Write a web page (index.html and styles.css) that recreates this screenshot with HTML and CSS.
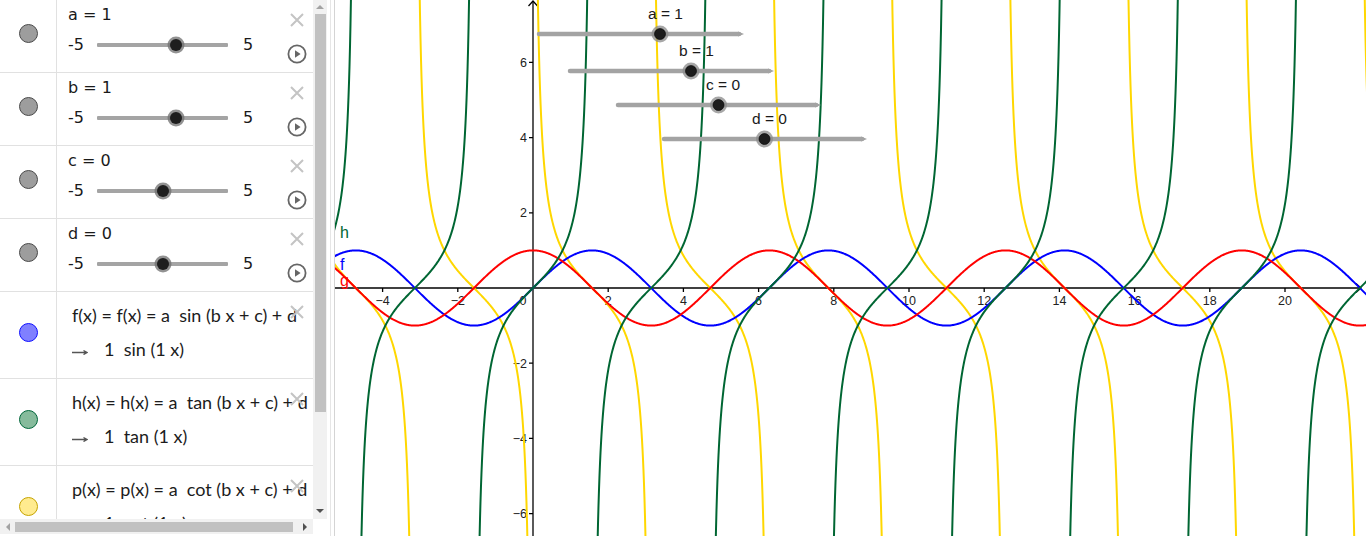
FILE: index.html
```html
<!DOCTYPE html>
<html>
<head>
<meta charset="utf-8">
<title>Graph</title>
<link rel="stylesheet" href="styles.css">
</head>
<body>
<div class="app">
  <div class="algebra">
    <div class="algebra-main">
      <div class="list">
        <div class="row slider">
          <div class="marble-col"><span class="marble"></span></div>
          <div class="slider-body">
            <div class="name">a = 1</div>
            <div class="range"><span class="min">-5</span><span class="track"><span class="knob" style="left:60%"></span></span><span class="max">5</span></div>
          </div>
          <div class="actions">
            <svg class="ico-x" width="16" height="16" viewBox="0 0 16 16"><path d="M2 2L14 14M14 2L2 14"/></svg>
            <svg class="ico-play" width="20" height="20" viewBox="0 0 20 20"><circle cx="10" cy="10" r="8.6"/><path d="M8 6.2L13.6 10L8 13.8Z"/></svg>
          </div>
        </div>
        <div class="row slider">
          <div class="marble-col"><span class="marble"></span></div>
          <div class="slider-body">
            <div class="name">b = 1</div>
            <div class="range"><span class="min">-5</span><span class="track"><span class="knob" style="left:60%"></span></span><span class="max">5</span></div>
          </div>
          <div class="actions">
            <svg class="ico-x" width="16" height="16" viewBox="0 0 16 16"><path d="M2 2L14 14M14 2L2 14"/></svg>
            <svg class="ico-play" width="20" height="20" viewBox="0 0 20 20"><circle cx="10" cy="10" r="8.6"/><path d="M8 6.2L13.6 10L8 13.8Z"/></svg>
          </div>
        </div>
        <div class="row slider">
          <div class="marble-col"><span class="marble"></span></div>
          <div class="slider-body">
            <div class="name">c = 0</div>
            <div class="range"><span class="min">-5</span><span class="track"><span class="knob" style="left:50%"></span></span><span class="max">5</span></div>
          </div>
          <div class="actions">
            <svg class="ico-x" width="16" height="16" viewBox="0 0 16 16"><path d="M2 2L14 14M14 2L2 14"/></svg>
            <svg class="ico-play" width="20" height="20" viewBox="0 0 20 20"><circle cx="10" cy="10" r="8.6"/><path d="M8 6.2L13.6 10L8 13.8Z"/></svg>
          </div>
        </div>
        <div class="row slider">
          <div class="marble-col"><span class="marble"></span></div>
          <div class="slider-body">
            <div class="name">d = 0</div>
            <div class="range"><span class="min">-5</span><span class="track"><span class="knob" style="left:50%"></span></span><span class="max">5</span></div>
          </div>
          <div class="actions">
            <svg class="ico-x" width="16" height="16" viewBox="0 0 16 16"><path d="M2 2L14 14M14 2L2 14"/></svg>
            <svg class="ico-play" width="20" height="20" viewBox="0 0 20 20"><circle cx="10" cy="10" r="8.6"/><path d="M8 6.2L13.6 10L8 13.8Z"/></svg>
          </div>
        </div>
        <div class="row func">
          <div class="marble-col"><span class="marble m-blue"></span></div>
          <div class="func-body">
            <div class="formula">f(x) = f(x) = a&nbsp; sin (b x + c) + d</div>
            <div class="formula out"><svg class="arrow" width="16" height="6" viewBox="0 0 16 6"><path d="M0 3.5H14M11.5 1.5L15 3.5L11.5 5.5"/></svg><span>1&nbsp; sin (1 x)</span></div>
          </div>
          <div class="actions">
            <svg class="ico-x" width="16" height="16" viewBox="0 0 16 16"><path d="M2 2L14 14M14 2L2 14"/></svg>
          </div>
        </div>
        <div class="row func">
          <div class="marble-col"><span class="marble m-green"></span></div>
          <div class="func-body">
            <div class="formula">h(x) = h(x) = a&nbsp; tan (b x + c) + d</div>
            <div class="formula out"><svg class="arrow" width="16" height="6" viewBox="0 0 16 6"><path d="M0 3.5H14M11.5 1.5L15 3.5L11.5 5.5"/></svg><span>1&nbsp; tan (1 x)</span></div>
          </div>
          <div class="actions">
            <svg class="ico-x" width="16" height="16" viewBox="0 0 16 16"><path d="M2 2L14 14M14 2L2 14"/></svg>
          </div>
        </div>
        <div class="row func">
          <div class="marble-col"><span class="marble m-yellow"></span></div>
          <div class="func-body">
            <div class="formula">p(x) = p(x) = a&nbsp; cot (b x + c) + d</div>
            <div class="formula out"><svg class="arrow" width="16" height="6" viewBox="0 0 16 6"><path d="M0 3.5H14M11.5 1.5L15 3.5L11.5 5.5"/></svg><span>1&nbsp; cot (1 x)</span></div>
          </div>
          <div class="actions">
            <svg class="ico-x" width="16" height="16" viewBox="0 0 16 16"><path d="M2 2L14 14M14 2L2 14"/></svg>
          </div>
        </div>
      </div>
      <div class="vscroll">
        <div class="sb-btn vs-up"><span class="tri tri-up"></span></div>
        <div class="vs-thumb"></div>
        <div class="sb-fill"></div>
        <div class="sb-btn vs-down"><span class="tri tri-down"></span></div>
      </div>
    </div>
    <div class="hscroll-row">
      <div class="hscroll">
        <div class="sb-btn hs-left"><span class="tri tri-left"></span></div>
        <div class="hs-thumb"></div>
        <div class="sb-fill"></div>
        <div class="sb-btn hs-right"><span class="tri tri-right"></span></div>
      </div>
      <div class="corner"></div>
    </div>
  </div>
  <div class="divider"></div>
  <div class="graphics">
    <svg class="plot" width="1031" height="536" viewBox="0 0 1031 536">
      <g class="axes">
        <line x1="0" y1="288" x2="1026" y2="288"/>
        <line x1="198" y1="536" x2="198" y2="1"/>
        <polyline points="1021,283.5 1026,288 1021,292.5"/>
        <polyline points="193.5,6 198,1 202.5,6"/>
        <path d="M47.6 288V292M122.8 288V292M273.2 288V292M348.4 288V292M423.6 288V292M498.8 288V292M574 288V292M649.2 288V292M724.4 288V292M799.6 288V292M874.8 288V292M950 288V292M194 212.8H198M194 137.6H198M194 62.4H198M194 363.2H198M194 438.4H198M194 513.6H198"/>
      </g>
      <g class="ticklabels">
        <text x="47.6" y="305" class="tl-x">−4</text>
        <text x="122.8" y="305" class="tl-x">−2</text>
        <text x="188" y="305" class="tl-x">0</text>
        <text x="273.2" y="305" class="tl-x">2</text>
        <text x="348.4" y="305" class="tl-x">4</text>
        <text x="423.6" y="305" class="tl-x">6</text>
        <text x="498.8" y="305" class="tl-x">8</text>
        <text x="574" y="305" class="tl-x">10</text>
        <text x="649.2" y="305" class="tl-x">12</text>
        <text x="724.4" y="305" class="tl-x">14</text>
        <text x="799.6" y="305" class="tl-x">16</text>
        <text x="874.8" y="305" class="tl-x">18</text>
        <text x="950" y="305" class="tl-x">20</text>
        <text x="192" y="67" class="tl-y">6</text>
        <text x="192" y="142.2" class="tl-y">4</text>
        <text x="192" y="217.4" class="tl-y">2</text>
        <text x="192" y="367.8" class="tl-y">−2</text>
        <text x="192" y="443" class="tl-y">−4</text>
        <text x="192" y="518.2" class="tl-y">−6</text>
      </g>
      <g class="curves">
        <path id="curve-p" class="c-p"/>
        <path id="curve-f" class="c-f"/>
        <path id="curve-g" class="c-g"/>
        <path id="curve-h" class="c-h"/>
      </g>
      <g class="fnlabels">
        <text x="5" y="238" class="fl-h">h</text>
        <text x="5" y="270" class="fl-f">f</text>
        <text x="5" y="286" class="fl-g">g</text>
      </g>
      <g class="gsliders">
        <line x1="204" y1="34" x2="404" y2="34" class="gs-line"/>
        <polygon points="403,31.5 409,34 403,36.5" class="gs-tip"/>
        <circle cx="325" cy="34" r="8.5" class="gs-halo"/>
        <circle cx="325" cy="34" r="5.5" class="gs-knob"/>
        <text x="313" y="18.5" class="gs-label">a = 1</text>

        <line x1="235" y1="71" x2="434" y2="71" class="gs-line"/>
        <polygon points="433,68.5 439,71 433,73.5" class="gs-tip"/>
        <circle cx="356" cy="71" r="8.5" class="gs-halo"/>
        <circle cx="356" cy="71" r="5.5" class="gs-knob"/>
        <text x="344" y="56" class="gs-label">b = 1</text>

        <line x1="283" y1="105" x2="481" y2="105" class="gs-line"/>
        <polygon points="480,102.5 486,105 480,107.5" class="gs-tip"/>
        <circle cx="383.5" cy="105" r="8.5" class="gs-halo"/>
        <circle cx="383.5" cy="105" r="5.5" class="gs-knob"/>
        <text x="371" y="89.5" class="gs-label">c = 0</text>

        <line x1="329" y1="139" x2="527" y2="139" class="gs-line"/>
        <polygon points="526,136.5 532,139 526,141.5" class="gs-tip"/>
        <circle cx="429.5" cy="139" r="8.5" class="gs-halo"/>
        <circle cx="429.5" cy="139" r="5.5" class="gs-knob"/>
        <text x="417" y="123.5" class="gs-label">d = 0</text>
      </g>
    </svg>
  </div>
</div>
<script src="script.js"></script>
</body>
</html>
```

FILE: styles.css
```css
* { box-sizing: border-box; }
html, body { margin: 0; padding: 0; background: #fff; overflow: hidden; }
body { font-family: "DejaVu Sans", sans-serif; color: #1a1a1a; }

.app { display: flex; width: 1366px; height: 536px; }

/* ---------- algebra view ---------- */
.algebra { width: 327px; flex: none; display: flex; flex-direction: column; }
.algebra-main { display: flex; height: 519px; }
.list { width: 313px; height: 519px; overflow: hidden; flex: none; }

.row { position: relative; display: flex; border-bottom: 1px solid #e1e1e1; }
.row.slider { height: 73px; }
.row.func { height: 87px; }

.marble-col {
  width: 57px; flex: none; border-right: 1px solid #e1e1e1;
  display: flex; align-items: center; justify-content: center; padding-bottom: 5px;
}
.marble { width: 19px; height: 19px; border-radius: 50%; border: 1px solid #4a4a4a; background: #9d9d9d; }
.marble.m-blue { background: #8080ff; border-color: #1010ff; }
.marble.m-green { background: #86bb9c; border-color: #00663a; }
.marble.m-yellow { background: #ffeb8f; border-color: #c6a400; }

.slider-body { flex: 1; padding: 5px 0 0 11px; font-size: 16px; line-height: 20px; white-space: nowrap; }
.name { height: 20px; }
.range { display: flex; align-items: center; height: 20px; margin-top: 10px; }
.range .min { width: 29px; }
.track { position: relative; width: 131px; height: 4px; background: #a4a4a4; border-radius: 1px; }
.knob {
  position: absolute; top: 50%; width: 12px; height: 12px; margin: -6px 0 0 -6px;
  border-radius: 50%; background: #1e1e1e; box-shadow: 0 0 0 2.5px rgba(110,110,110,.75);
}
.range .max { margin-left: 15px; }

.func-body {
  flex: 1; min-width: 0; padding: 11px 0 0 15px; overflow: hidden; white-space: nowrap;
  font-family: "Lato", "DejaVu Sans", sans-serif; font-size: 18px; line-height: 24px; color: #1c1c1c;
}
.formula { height: 24px; }
.formula.out { margin-top: 10px; display: flex; align-items: center; }
.arrow { flex: none; margin-right: 16px; margin-top: 6px; }
.arrow path { fill: none; stroke: #555; stroke-width: 1.4; }

.actions {
  position: absolute; top: 12px; right: 6px; width: 20px;
  display: flex; flex-direction: column; align-items: center; gap: 16px;
}
.ico-x path { stroke: #c4c4c4; stroke-width: 2; fill: none; }
.ico-play circle { fill: none; stroke: #666; stroke-width: 1.8; }
.ico-play path { fill: #666; }

/* scrollbars */
.vscroll { width: 14px; flex: none; background: #f1f1f1; display: flex; flex-direction: column; align-items: center; }
.sb-btn { display: flex; align-items: center; justify-content: center; flex: none; }
.vs-up { height: 14px; width: 14px; }
.vs-thumb { width: 11px; height: 398px; background: #c1c1c1; flex: none; }
.sb-fill { flex: 1; }
.vs-down { height: 17px; width: 14px; }

.hscroll-row { display: flex; height: 15px; }
.hscroll { width: 313px; flex: none; background: #f1f1f1; display: flex; align-items: center; }
.hs-left { width: 15px; height: 15px; }
.hs-thumb { width: 278px; height: 10px; background: #c1c1c1; flex: none; }
.hs-right { width: 17px; height: 15px; }
.corner { width: 14px; background: #fff; }

.tri { width: 0; height: 0; display: block; }
.tri-up { border-left: 4px solid transparent; border-right: 4px solid transparent; border-bottom: 4px solid #a3a3a3; }
.tri-down { border-left: 4px solid transparent; border-right: 4px solid transparent; border-top: 4px solid #505050; }
.tri-left { border-top: 4px solid transparent; border-bottom: 4px solid transparent; border-right: 4px solid #a3a3a3; }
.tri-right { border-top: 4px solid transparent; border-bottom: 4px solid transparent; border-left: 4px solid #505050; }

.divider { width: 8px; flex: none; display: flex; }
.divider::before { content: ""; width: 5px; margin-left: 3px; border-left: 1px solid #e6e6e6; border-right: 1px solid #d4d4d4; }

/* ---------- graphics view ---------- */
.graphics { flex: 1; position: relative; overflow: hidden; background: #fff; }
.plot { display: block; }
.axes line, .axes polyline, .axes path { stroke: #000; stroke-width: 1.3; fill: none; }
.ticklabels text { font-family: "Liberation Sans", Arial, sans-serif; font-size: 12.5px; fill: #222; }
.tl-x { text-anchor: middle; }
.tl-y { text-anchor: end; }

.curves path { fill: none; stroke-width: 2; stroke-linejoin: round; }
.c-f { stroke: #0000ff; }
.c-g { stroke: #ff0000; }
.c-h { stroke: #006633; }
.c-p { stroke: #ffd700; }

.fnlabels text { font-family: "Liberation Sans", Arial, sans-serif; font-size: 16px; }
.fl-h { fill: #006633; }
.fl-f { fill: #0000ff; }
.fl-g { fill: #ff0000; }

.gs-line { stroke: #a3a3a3; stroke-width: 4.5; stroke-linecap: round; }
.gs-tip { fill: #a3a3a3; }
.gs-halo { fill: #8a8a8a; fill-opacity: .75; }
.gs-knob { fill: #1c1c1c; stroke: #000; stroke-width: .6; }
.gs-label { font-family: "Liberation Sans", Arial, sans-serif; font-size: 15.5px; fill: #1a1a1a; }
```

FILE: script.js
```js
(function () {
  var X0 = 198, Y0 = 288, S = 37.6, W = 1031;
  function build(fn) {
    var d = '', pen = false, prev = null;
    for (var px = -2; px <= W + 2; px += 0.5) {
      var x = (px - X0) / S, y = fn(x);
      if (!isFinite(y) || Math.abs(y) > 40) { pen = false; prev = null; continue; }
      if (prev !== null && Math.abs(y - prev) > 20) pen = false;
      d += (pen ? 'L' : 'M') + px.toFixed(1) + ' ' + (Y0 - y * S).toFixed(2) + ' ';
      pen = true; prev = y;
    }
    return d;
  }
  function set(id, fn) { document.getElementById(id).setAttribute('d', build(fn)); }
  set('curve-f', Math.sin);
  set('curve-g', Math.cos);
  set('curve-h', Math.tan);
  set('curve-p', function (x) { return 1 / Math.tan(x); });
})();
```
